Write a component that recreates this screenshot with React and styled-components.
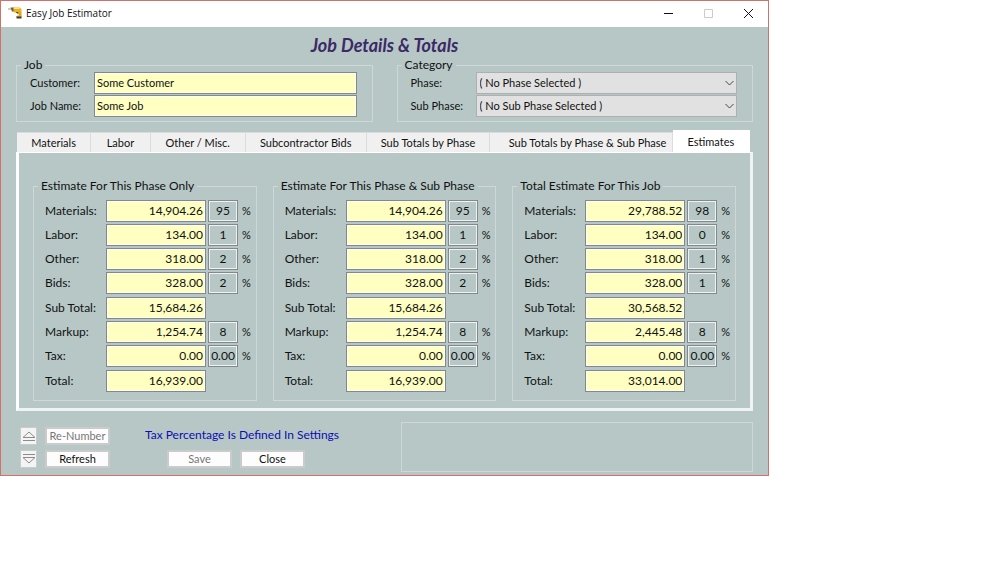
import React, { useState } from 'react';
import styled, { createGlobalStyle } from 'styled-components';

const tabs = [
  { name: 'Materials', size: 74 },
  { name: 'Labor', size: 59 },
  { name: 'Other / Misc.', size: 95 },
  { name: 'Subcontractor Bids', size: 121 },
  { name: 'Sub Totals by Phase', size: 124 },
  { name: 'Sub Totals by Phase & Sub Phase', size: 170, indent: true },
  { name: 'Estimates', size: 77 },
];

const phaseBlocks = [
  [
    { label: 'Materials:', amount: '14,904.26', percent: '95' },
    { label: 'Labor:', amount: '134.00', percent: '1' },
    { label: 'Other:', amount: '318.00', percent: '2' },
    { label: 'Bids:', amount: '328.00', percent: '2' },
  ],
  [
    { label: 'Sub Total:', amount: '15,684.26' },
    { label: 'Markup:', amount: '1,254.74', percent: '8' },
    { label: 'Tax:', amount: '0.00', percent: '0.00' },
  ],
  [{ label: 'Total:', amount: '16,939.00' }],
];

const jobBlocks = [
  [
    { label: 'Materials:', amount: '29,788.52', percent: '98' },
    { label: 'Labor:', amount: '134.00', percent: '0' },
    { label: 'Other:', amount: '318.00', percent: '1' },
    { label: 'Bids:', amount: '328.00', percent: '1' },
  ],
  [
    { label: 'Sub Total:', amount: '30,568.52' },
    { label: 'Markup:', amount: '2,445.48', percent: '8' },
    { label: 'Tax:', amount: '0.00', percent: '0.00' },
  ],
  [{ label: 'Total:', amount: '33,014.00' }],
];

const estimates = [
  { id: 'phase', title: 'Estimate For This Phase Only', blocks: phaseBlocks },
  { id: 'sub', title: 'Estimate For This Phase & Sub Phase', blocks: phaseBlocks },
  { id: 'job', title: 'Total Estimate For This Job', blocks: jobBlocks },
];

const DrillIcon = () => (
  <svg width="14" height="12" viewBox="0 0 14 12" aria-hidden="true">
    <path d="M0 1.500h3v1H0z" fill="#9a9a8c" />
    <path d="M2.500 0.500h3.500v4H4z" fill="#6b6240" />
    <path d="M5 0.500h6.500l2 1.500v3l-2 .5H6z" fill="#e9b320" />
    <path d="M6 1h5l1 1H6z" fill="#ffe07a" />
    <path d="M10 5h3.500v4H11z" fill="#e0a416" />
    <path d="M8 5h2l.5 1.500H9z" fill="#3a3426" />
    <path d="M8.500 9h5v2.500h-5z" fill="#3d3a2c" />
    <path d="M9 8.500h4.500v1H9z" fill="#e9b320" />
  </svg>
);

const UpIcon = () => (
  <svg width="14" height="10" viewBox="0 0 14 10" fill="none" stroke="#8c8c8c" aria-hidden="true">
    <path d="M1 6.500h12L7 1z M1 9.500h12" />
  </svg>
);

const DownIcon = () => (
  <svg width="14" height="10" viewBox="0 0 14 10" fill="none" stroke="#8c8c8c" aria-hidden="true">
    <path d="M1 3.500h12L7 9z M1 0.500h12" />
  </svg>
);

const Combo = ({ id, label, value }) => (
  <FieldRow>
    <CategoryLabel htmlFor={id}>{label}</CategoryLabel>
    <SelectWrap>
      <Select id={id} defaultValue={value}>
        <option>{value}</option>
      </Select>
      <Chevron width="9" height="6" viewBox="0 0 9 6" aria-hidden="true">
        <path d="M0.500 1l4 4 4-4" fill="none" stroke="#444" />
      </Chevron>
    </SelectWrap>
  </FieldRow>
);

const EstimateGroup = ({ id, title, blocks }) => (
  <Group>
    <Legend>{title}</Legend>
    <Blocks>
      {blocks.map((rows, i) => (
        <Block key={i}>
          {rows.map((row) => {
            const key = `${id}-${row.label}`;
            return (
              <AmountRow key={key}>
                <AmountLabel htmlFor={key}>{row.label}</AmountLabel>
                <AmountInput id={key} defaultValue={row.amount} />
                {row.percent && (
                  <>
                    <PercentInput id={`${key}-pct`} defaultValue={row.percent} />
                    <PercentSign htmlFor={`${key}-pct`}>%</PercentSign>
                  </>
                )}
              </AmountRow>
            );
          })}
        </Block>
      ))}
    </Blocks>
  </Group>
);

const App = () => {
  const [activeTab, setActiveTab] = useState('Estimates');

  return (
    <>
      <GlobalStyle />
      <Window>
        <TitleBar>
          <DrillIcon />
          <TitleText>Easy Job Estimator</TitleText>
          <WindowButton aria-label="Minimize">
            <svg width="11" height="11" viewBox="0 0 11 11" stroke="#111" fill="none">
              <path d="M1 5.500h9" />
            </svg>
          </WindowButton>
          <WindowButton aria-label="Maximize" disabled>
            <svg width="11" height="11" viewBox="0 0 11 11" stroke="#ccc" fill="none">
              <path d="M1.500 1.500h8v8h-8z" />
            </svg>
          </WindowButton>
          <WindowButton aria-label="Close">
            <svg width="11" height="11" viewBox="0 0 11 11" stroke="#111" fill="none">
              <path d="M1 1l9 9M10 1l-9 9" />
            </svg>
          </WindowButton>
        </TitleBar>

        <Body>
          <Heading>Job Details &amp; Totals</Heading>

          <TopGroups>
            <Group>
              <Legend>Job</Legend>
              <JobFields>
                <FieldRow>
                  <JobLabel htmlFor="customer">Customer:</JobLabel>
                  <TextInput id="customer" defaultValue="Some Customer" />
                </FieldRow>
                <FieldRow>
                  <JobLabel htmlFor="jobName">Job Name:</JobLabel>
                  <TextInput id="jobName" defaultValue="Some Job" />
                </FieldRow>
              </JobFields>
            </Group>
            <Group>
              <Legend>Category</Legend>
              <CategoryFields>
                <Combo id="phaseSelect" label="Phase:" value="( No Phase Selected )" />
                <Combo id="subPhaseSelect" label="Sub Phase:" value="( No Sub Phase Selected )" />
              </CategoryFields>
            </Group>
          </TopGroups>

          <TabBar role="tablist">
            {tabs.map((tab) => (
              <Tab
                key={tab.name}
                role="tab"
                $size={tab.size}
                $indent={tab.indent}
                $active={tab.name === activeTab}
                aria-selected={tab.name === activeTab}
                onClick={() => setActiveTab(tab.name)}
              >
                {tab.name}
              </Tab>
            ))}
          </TabBar>

          <Panel>
            {estimates.map((group) => (
              <EstimateGroup key={group.id} {...group} />
            ))}
          </Panel>

          <Footer>
            <Actions>
              <Column>
                <ArrowButton aria-label="Move up" disabled>
                  <UpIcon />
                </ArrowButton>
                <ArrowButton aria-label="Move down" disabled>
                  <DownIcon />
                </ArrowButton>
              </Column>
              <Column>
                <Button disabled>Re-Number</Button>
                <Button>Refresh</Button>
              </Column>
              <MessageColumn>
                <Message>Tax Percentage Is Defined In Settings</Message>
                <SaveRow>
                  <Button disabled>Save</Button>
                  <Button>Close</Button>
                </SaveRow>
              </MessageColumn>
            </Actions>
            <StatusBox />
          </Footer>
        </Body>
      </Window>
    </>
  );
};

export default App;


const GlobalStyle = createGlobalStyle`
  * {
    box-sizing: border-box;
  }

  body {
    margin: 0;
    background: #fff;
    color: #111;
    font-family: "Comic Sans MS", Lato, sans-serif;
    font-size: 12px;
    line-height: 14px;
  }

  button, input, select {
    font: inherit;
    color: inherit;
    margin: 0;
    border-radius: 0;
    outline: none;
  }
`;

const Window = styled.div`
  width: 100%;
  max-width: 769px;
  border: 1px solid #d2706b;
  background: #b6c7c6;
`;

const TitleBar = styled.header`
  display: flex;
  align-items: center;
  height: 26px;
  padding: 0 0 2px 7px;
  background: #fff;
`;

const TitleText = styled.span`
  flex: 1;
  margin-left: 4px;
  font-family: "Open Sans", sans-serif;
  font-size: 10px;
`;

const WindowButton = styled.button`
  display: flex;
  align-items: center;
  justify-content: center;
  width: 40px;
  height: 24px;
  padding: 0;
  border: none;
  background: none;
`;

const Body = styled.main`
  padding: 8px 15px 3px;
`;

const Heading = styled.h1`
  margin: 0;
  color: #3b2a66;
  font-size: 18px;
  font-style: italic;
  font-weight: bold;
  line-height: 20px;
  text-align: center;
`;

const TopGroups = styled.div`
  display: grid;
  grid-template-columns: 1fr 1fr;
  gap: 24px;
  margin-top: 3px;
`;

const Group = styled.fieldset`
  min-width: 0;
  margin: 0;
  padding: 0;
  border: 1px solid #cfd8d8;
`;

const Legend = styled.legend`
  margin-left: 4px;
  padding: 0 3px;
`;

const JobFields = styled.div`
  display: flex;
  flex-direction: column;
  gap: 1px;
  padding: 0 15px 4px 13px;
`;

const CategoryFields = styled.div`
  display: flex;
  flex-direction: column;
  gap: 1px;
  padding: 0 15px 4px 13px;
`;

const FieldRow = styled.div`
  display: flex;
  align-items: center;
`;

const JobLabel = styled.label`
  width: 64px;
  font-size: 11px;
`;

const CategoryLabel = styled.label`
  width: 65px;
  font-size: 11px;
`;

const TextInput = styled.input`
  flex: 1;
  min-width: 0;
  height: 22px;
  padding: 0 2px 2px;
  border: 1px solid #82888c;
  background: #ffffc1;
  box-shadow: inset 0 0 0 1px #fdfdf0;
  font-size: 11px;
`;

const SelectWrap = styled.div`
  position: relative;
  flex: 1;
`;

const Select = styled.select`
  display: block;
  width: 100%;
  height: 22px;
  padding: 0 20px 1px 3px;
  border: 1px solid #acb0b0;
  background: #e1e1e1;
  appearance: none;
  font-size: 11px;
`;

const Chevron = styled.svg`
  position: absolute;
  top: 8px;
  right: 3px;
  pointer-events: none;
`;

const TabBar = styled.div`
  display: flex;
  align-items: flex-end;
  height: 22px;
  margin: 8px 3px 0 1px;
`;

const Tab = styled.button`
  flex: ${(props) => props.$size} 1 0;
  height: ${(props) => (props.$active ? 22 : 20)}px;
  padding: 0 0 0 ${(props) => (props.$indent ? 13 : 0)}px;
  border: 1px solid ${(props) => (props.$active ? '#fff' : '#dcdcdc')};
  border-left: none;
  border-bottom: none;
  background: ${(props) => (props.$active ? '#fff' : '#f0f0f0')};
  font-size: 11px;
  white-space: nowrap;
`;

const Panel = styled.section`
  display: grid;
  grid-template-columns: repeat(3, 1fr);
  gap: 16px;
  padding: 26px 14px 7px;
  border: 3px solid #fff;
  border-top-width: 1px;
  border-right-color: #f0f3f3;
  border-bottom-color: #f0f3f3;
`;

const Blocks = styled.div`
  display: flex;
  flex-direction: column;
  gap: 3px;
  padding: 7px 4px 8px 11px;
`;

const Block = styled.div`
  display: flex;
  flex-direction: column;
  gap: 2px;
`;

const AmountRow = styled.div`
  display: flex;
  align-items: center;
`;

const AmountLabel = styled.label`
  width: 61px;
`;

const AmountInput = styled.input`
  width: 100px;
  height: 22px;
  padding: 0 2px 2px;
  border: 1px solid #82888c;
  background: #ffffc1;
  box-shadow: inset 0 0 0 1px #fdfdf0;
  text-align: right;
`;

const PercentInput = styled.input`
  width: 30px;
  height: 22px;
  margin-left: 2px;
  padding: 0 0 2px;
  border: 1px solid #82888c;
  background: #b6c7c6;
  box-shadow: inset 0 0 0 1px #eef2f2;
  text-align: center;
`;

const PercentSign = styled.label`
  margin-left: 4px;
  font-size: 11px;
`;

const Footer = styled.footer`
  display: grid;
  grid-template-columns: 385fr 352fr;
  margin-top: 11px;
`;

const Actions = styled.div`
  display: flex;
  gap: 8px;
  padding: 5px 0 0 4px;
`;

const Column = styled.div`
  display: flex;
  flex-direction: column;
  gap: 5px;
`;

const Button = styled.button`
  width: 65px;
  height: 18px;
  padding: 0;
  border: 2px solid #cbcbcb;
  background: #fdfdfd;
  font-size: 11px;
  line-height: 14px;

  &:disabled {
    color: #777;
  }
`;

const ArrowButton = styled.button`
  display: flex;
  align-items: center;
  justify-content: center;
  width: 17px;
  height: 18px;
  padding: 0;
  border: 1px solid #cbcbcb;
  background: #f4f4f4;
`;

const MessageColumn = styled.div`
  display: flex;
  flex-direction: column;
  gap: 8px;
  margin-left: 27px;
`;

const Message = styled.p`
  margin: 0;
  color: #0d0db4;
  font-size: 12px;
  line-height: 15px;
`;

const SaveRow = styled.div`
  display: flex;
  gap: 8px;
  padding-left: 22px;
`;

const StatusBox = styled.div`
  height: 50px;
  border: 1px solid #cfd8d8;
`;
